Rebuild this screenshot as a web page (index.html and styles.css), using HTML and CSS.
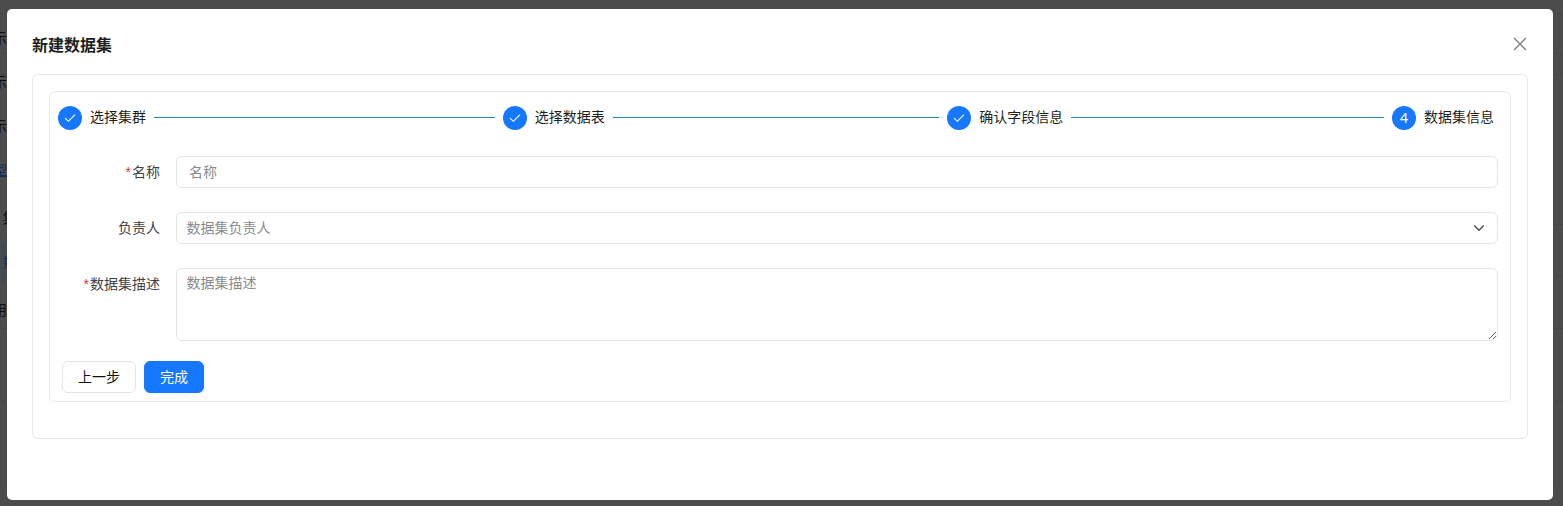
FILE: index.html
```html
<!DOCTYPE html>
<html lang="zh-CN">
<head>
<meta charset="utf-8">
<title>新建数据集</title>
<link rel="stylesheet" href="styles.css">
</head>
<body>
<div class="backdrop">
  <div class="line l1"></div><div class="line l2"></div><div class="line l3"></div>
  <div class="line l4"></div><div class="line l5"></div><div class="line l6"></div><div class="line l7"></div>
  <div class="stripe"></div>
  <span class="peek p1">示</span><span class="peek p2">示</span><span class="peek p3">示</span>
  <span class="peek p4">型</span><span class="peek p5">集</span><span class="peek p6">数</span><span class="peek p7">用</span>
</div>
<main class="modal">
  <header class="modal-head">
    <h1 class="title">新建数据集</h1>
    <svg class="close" width="16" height="16" viewBox="0 0 16 16"><path d="M2 2L14 14M14 2L2 14"/></svg>
  </header>
  <section class="panel">
    <div class="card">
      <div class="steps">
        <div class="step"><span class="dot"><svg width="14" height="14" viewBox="0 0 14 14"><path d="M2 7.2L5.4 10.3L12 3.6"/></svg></span><span class="name">选择集群</span><i class="tail"></i></div>
        <div class="step"><span class="dot"><svg width="14" height="14" viewBox="0 0 14 14"><path d="M2 7.2L5.4 10.3L12 3.6"/></svg></span><span class="name">选择数据表</span><i class="tail"></i></div>
        <div class="step"><span class="dot"><svg width="14" height="14" viewBox="0 0 14 14"><path d="M2 7.2L5.4 10.3L12 3.6"/></svg></span><span class="name">确认字段信息</span><i class="tail"></i></div>
        <div class="step last"><span class="dot">4</span><span class="name">数据集信息</span></div>
      </div>
      <form class="form">
        <div class="row"><label class="label"><b class="req">*</b>名称</label><input class="field name-field" type="text" placeholder="名称"></div>
        <div class="row"><label class="label">负责人</label><div class="field select"><span>数据集负责人</span><svg width="12" height="12" viewBox="0 0 12 12"><path d="M1.2 3.5L6 8.3L10.8 3.5"/></svg></div></div>
        <div class="row"><label class="label"><b class="req">*</b>数据集描述</label><textarea class="field area" placeholder="数据集描述"></textarea></div>
      </form>
      <div class="actions"><button class="btn">上一步</button><button class="btn primary">完成</button></div>
    </div>
  </section>
</main>
</body>
</html>
```
FILE: styles.css
```css
* { box-sizing: border-box; }
body {
  margin: 0;
  height: 506px;
  overflow: hidden;
  padding: 9px 10px 6px 7px;
  background: #4c4c4c;
  font: 14px/22px "Liberation Sans", "Noto Sans CJK SC", sans-serif;
  color: #1d1f21;
}
.backdrop { position: absolute; inset: 0; overflow: hidden; }
.line { position: absolute; left: 0; right: 0; height: 1px; background: #464646; }
.l1 { top: 13px; } .l2 { top: 53px; } .l3 { top: 74px; } .l4 { top: 224px; }
.l5 { top: 276px; } .l6 { top: 328px; } .l7 { top: 401px; }
.stripe { position: absolute; left: 0; width: 7px; top: 242px; height: 40px; background: #464b50; }
.peek { position: absolute; left: -7px; color: #0c0c0d; }
.p1 { top: 27px; } .p2 { top: 71px; } .p3 { top: 115px; }
.p4 { top: 159px; color: #0c2b5c; text-decoration: underline; }
.p5 { top: 207px; left: 3px; }
.p6 { top: 251px; left: 3px; color: #0c2b5c; }
.p7 { top: 299px; }
.modal {
  position: relative;
  height: 491px;
  padding: 24px 25px;
  background: #fff;
  border-radius: 5px;
}
.modal-head { display: flex; justify-content: space-between; height: 41px; }
.title { margin: 0; font-size: 16px; line-height: 26px; font-weight: 600; }
.close { margin-top: 3px; }
.close path { stroke: #858589; stroke-width: 1.5; fill: none; }
.panel { height: 365px; padding: 16px; border: 1px solid #e8e8e8; border-radius: 6px; }
.card { height: 311px; border: 1px solid #e8e8e8; border-radius: 6px; padding: 14px 12px 8px; }
.steps { display: flex; gap: 8px; margin: 0 -4px; height: 24px; }
.step { display: flex; flex: 1; align-items: center; }
.step.last { flex: none; width: 110px; }
.dot {
  display: flex;
  align-items: center;
  justify-content: center;
  width: 24px;
  height: 24px;
  margin-right: 8px;
  border-radius: 50%;
  background: #1677ff;
  color: #fff;
  font-family: "Noto Sans", sans-serif;
}
.dot path { fill: none; stroke: #fff; stroke-width: 1.1; }
.name { white-space: nowrap; position: relative; top: -1px; }
.tail { flex: 1; height: 1px; margin-left: 8px; background: #2386a4; position: relative; top: -1px; }
.form { display: grid; gap: 24px; padding-top: 26px; }
.row { display: flex; gap: 16px; }
.label { width: 98px; padding-top: 5px; text-align: right; white-space: nowrap; color: #414345; }
.req { color: #e5343a; font-weight: 400; margin-right: 1px; }
.field {
  flex: 1;
  height: 32px;
  margin: 0;
  border: 1px solid #e5e5e6;
  border-radius: 6px;
  background: #fff;
  font: inherit;
  color: #8b8b8b;
  padding: 0 12px;
  outline: 0;
}
.field::placeholder { color: #8b8b8b; opacity: 1; }
.select { display: flex; align-items: center; justify-content: space-between; padding-left: 9.5px; }
.select path { fill: none; stroke: #4a4a4d; stroke-width: 1.3; }
.area { height: 73px; padding: 3px 9.5px; resize: vertical; }
.actions { display: flex; gap: 8px; padding-top: 20px; }
.btn {
  height: 32px;
  width: 74px;
  padding: 0;
  border: 1px solid #e5e5e6;
  border-radius: 6px;
  background: #fff;
  font: inherit;
  color: #111;
}
.primary { width: 60px; border-color: #1677ff; background: #1677ff; color: #fff; }
```
